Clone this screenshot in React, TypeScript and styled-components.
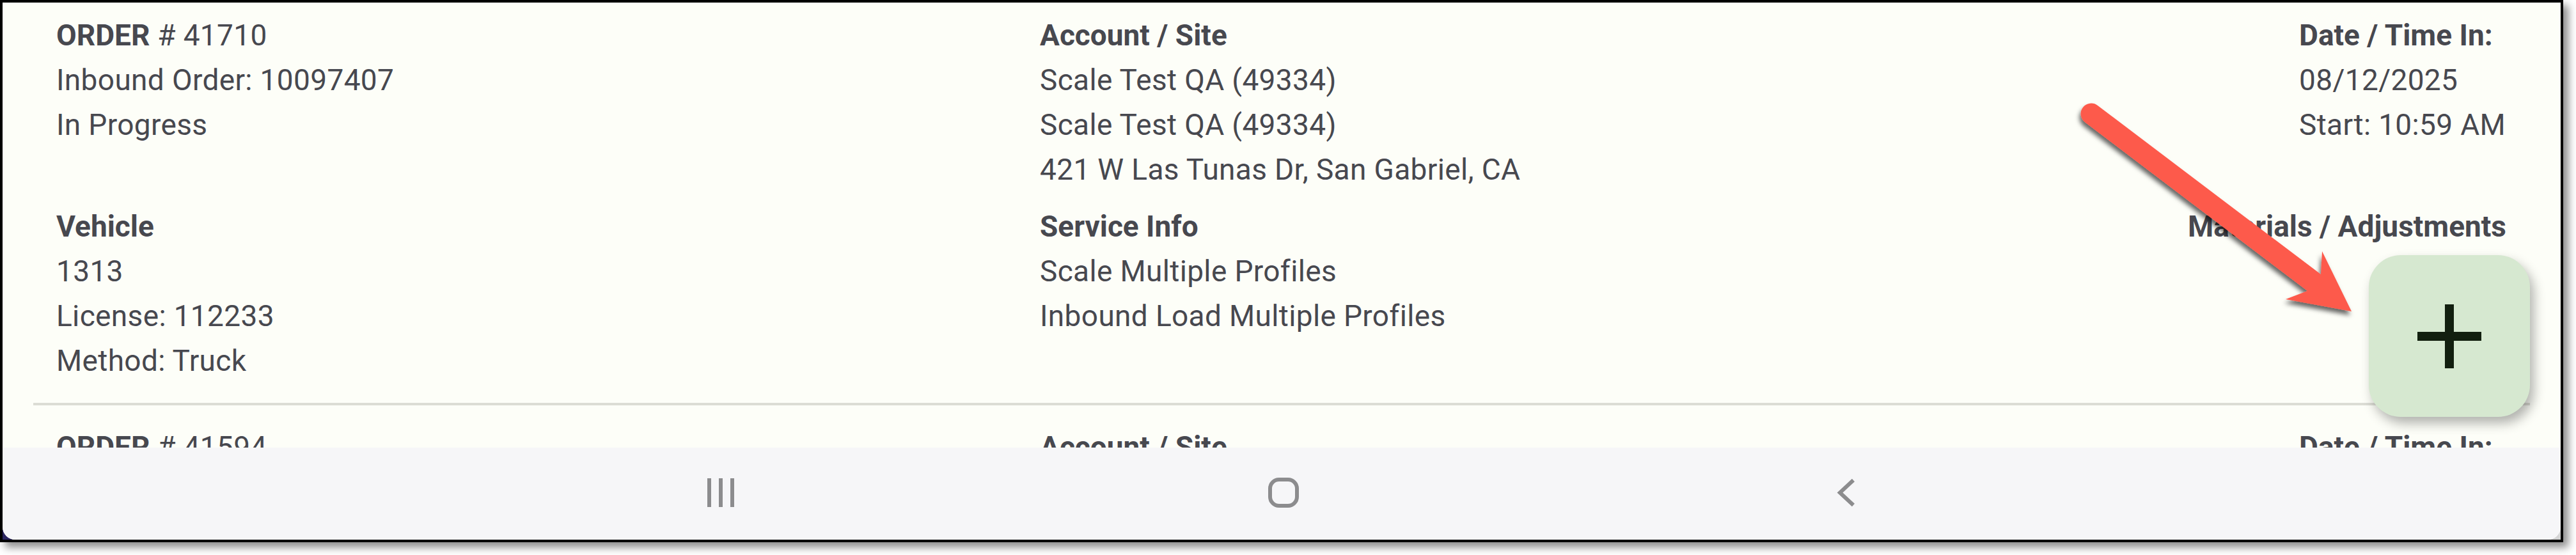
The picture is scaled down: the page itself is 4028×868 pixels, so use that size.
import React from "react";
import styled, { createGlobalStyle } from "styled-components";

const Global = createGlobalStyle`
  html, body { margin: 0; padding: 0; background: #fff; }
  body { width: 4028px; height: 868px; overflow: hidden; font-family: Roboto, "Liberation Sans", sans-serif; }
`;

const Frame = styled.div`
  position: relative;
  box-sizing: border-box;
  width: 4008px;
  height: 848px;
  border: 4px solid #000;
  background: linear-gradient(90deg, #2b2560 50%, #d4d4d4 50%);
  box-shadow: 8px 8px 12px rgba(0, 0, 0, 0.45);
  display: flex;
  flex-direction: column;
`;

const Screen = styled.div`
  flex: 1;
  display: flex;
  flex-direction: column;
  overflow: hidden;
  border-radius: 0 0 20px 20px;
  background: #f6f6f8;
`;

const List = styled.div`
  height: 696px;
  overflow: hidden;
  background: #fdfef8;
  padding: 0 48px;
`;

const Order = styled.section`
  display: flex;
  flex-direction: column;
  gap: 19px;
  padding: 16px 37px 0 36px;
  height: 630px;
  box-sizing: border-box;
  margin-bottom: 14px;
  border-bottom: 4px solid #dcddd5;
  &:last-child { border-bottom: 0; }
`;

const Row = styled.div`
  display: grid;
  grid-template-columns: 1538px 1fr auto;
`;

const Col = styled.div`
  display: flex;
  flex-direction: column;
`;

const DateCol = styled(Col)`
  width: 324px;
`;

const EndRight = styled(Col)`
  text-align: right;
`;

const Line = styled.div`
  font-size: 46px;
  line-height: 70px;
  letter-spacing: 0.35px;
  color: #47484f;
  white-space: nowrap;
`;

const B = styled.b`
  font-weight: 700;
  letter-spacing: 0;
`;

const Fab = styled.div`
  position: absolute;
  left: 3700px;
  top: 395px;
  width: 252px;
  height: 253px;
  border-radius: 50px;
  background: #d6e8d0;
  box-shadow: 6px 10px 18px rgba(0, 0, 0, 0.3);
  display: flex;
  align-items: center;
  justify-content: center;
`;

const Arrow = styled.svg`
  position: absolute;
  left: 0;
  top: 0;
  width: 4000px;
  height: 840px;
  pointer-events: none;
`;

const Nav = styled.nav`
  flex: 1;
  display: grid;
  grid-template-columns: 1102px 42px 835px 48px 842px 27px;
  align-items: center;
  padding-bottom: 3px;
  background: #f6f6f8;
`;

const NavIcon = styled.svg`
  display: block;
  overflow: visible;
  fill: none;
  stroke: #8c8c8e;
`;

type O = { id: string; inbound: string; status: string; acct: string[]; date: string; start: string; veh: string; lic: string; svc: string[] };

const first: O = {
  id: "41710",
  inbound: "Inbound Order: 10097407",
  status: "In Progress",
  acct: ["Scale Test QA (49334)", "Scale Test QA (49334)", "421 W Las Tunas Dr, San Gabriel, CA"],
  date: "08/12/2025",
  start: "Start: 10:59 AM",
  veh: "1313",
  lic: "License: 112233",
  svc: ["Scale Multiple Profiles", "Inbound Load Multiple Profiles"],
};

export default function App() {
  return (
    <>
      <Global />
      <Frame>
        <Screen>
          <List>
            <Order>
              <Row>
                <Col>
                  <Line><B>ORDER</B> # {first.id}</Line>
                  <Line>{first.inbound}</Line>
                  <Line>{first.status}</Line>
                </Col>
                <Col>
                  <Line><B>Account / Site</B></Line>
                  {first.acct.map((a, i) => <Line key={i}>{a}</Line>)}
                </Col>
                <DateCol>
                  <Line><B>Date / Time In:</B></Line>
                  <Line>{first.date}</Line>
                  <Line>{first.start}</Line>
                </DateCol>
              </Row>
              <Row>
                <Col>
                  <Line><B>Vehicle</B></Line>
                  <Line>{first.veh}</Line>
                  <Line>{first.lic}</Line>
                  <Line>Method: Truck</Line>
                </Col>
                <Col>
                  <Line><B>Service Info</B></Line>
                  {first.svc.map((a, i) => <Line key={i}>{a}</Line>)}
                </Col>
                <EndRight>
                  <Line><B>Materials / Adjustments</B></Line>
                </EndRight>
              </Row>
            </Order>
            <Order>
              <Row>
                <Col><Line><B>ORDER</B> # 41594</Line></Col>
                <Col><Line><B>Account / Site</B></Line></Col>
                <DateCol><Line><B>Date / Time In:</B></Line></DateCol>
              </Row>
            </Order>
          </List>
          <Nav>
            <span />
            <NavIcon width="42" height="45" viewBox="0 0 42 45" strokeWidth="6">
              <path d="M3 0V45M21 0V45M39 0V45" />
            </NavIcon>
            <span />
            <NavIcon width="48" height="47" viewBox="0 0 48 47" strokeWidth="6">
              <rect x="3" y="3" width="42" height="41" rx="14" />
            </NavIcon>
            <span />
            <NavIcon width="27" height="45" viewBox="0 0 27 45" strokeWidth="6">
              <path d="M25 3L4 22.5L25 42" />
            </NavIcon>
          </Nav>
        </Screen>
        <Fab>
          <svg width="100" height="100" viewBox="0 0 100 100">
            <path d="M43 0h14v43h43v14H57v43H43V57H0V43h43z" fill="#121f0f" />
          </svg>
        </Fab>
        <Arrow viewBox="4 4 4000 840">
          <defs>
            <filter id="s" x="-20%" y="-20%" width="140%" height="140%">
              <feDropShadow dx="-2" dy="6" stdDeviation="3.5" floodColor="#000" floodOpacity="0.6" />
            </filter>
          </defs>
          <path
            d="M3280 165L3629 429L3631 393L3677 487L3574 468L3608 455L3260 191A16 16 0 0 1 3280 165Z"
            fill="#fd5a4c"
            filter="url(#s)"
          />
        </Arrow>
      </Frame>
    </>
  );
}
